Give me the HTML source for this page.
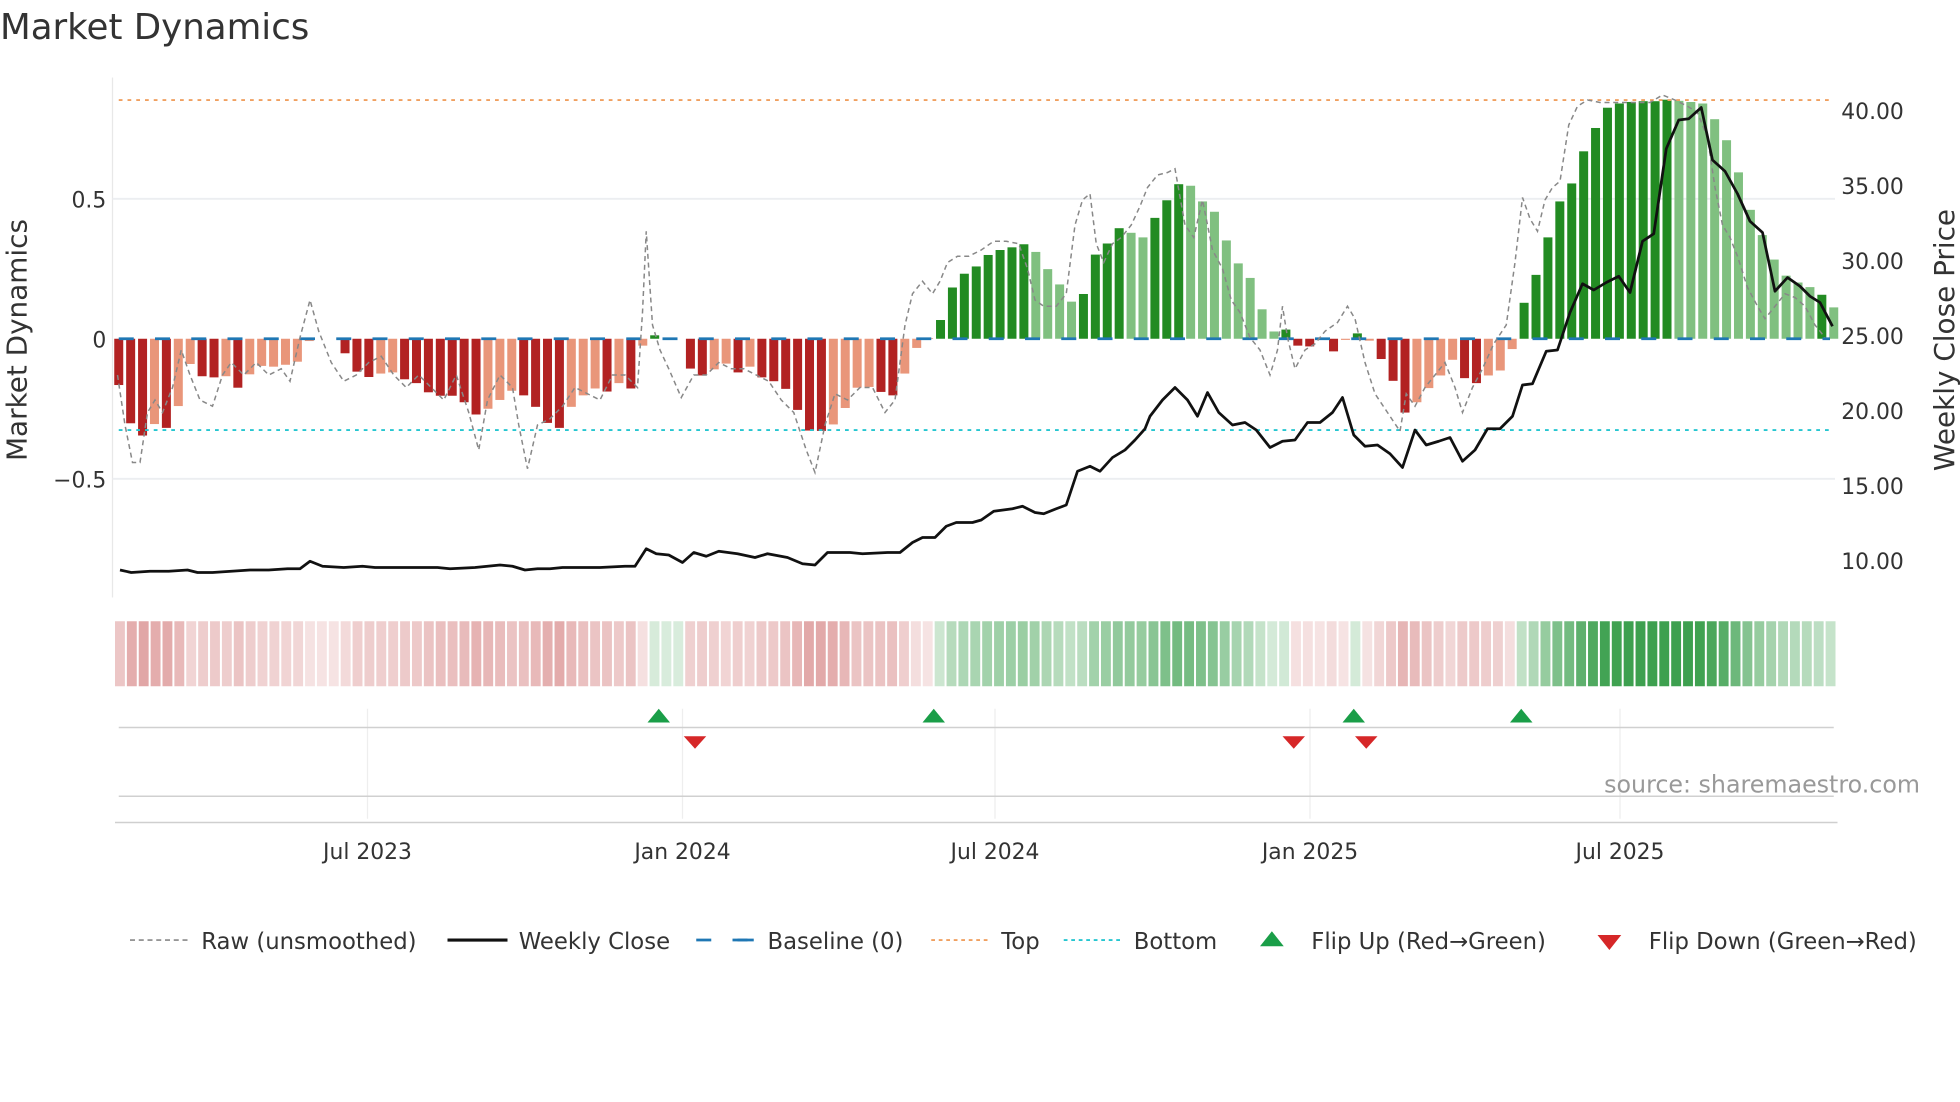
<!DOCTYPE html>
<html><head><meta charset="utf-8"><style>
html,body{margin:0;padding:0;background:#fff;}
svg{display:block;}
text{font-family:"DejaVu Sans","Liberation Sans",sans-serif;fill:#333;}
</style></head><body>
<svg id="s" width="1960" height="1102" viewBox="0 0 1568 881.6" xmlns="http://www.w3.org/2000/svg">
<rect width="1568" height="881.6" fill="#fff"/>
<text x="0" y="31" font-size="28.5">Market Dynamics</text>
<line x1="90" y1="62" x2="90" y2="478" stroke="#e8e8e8" stroke-width="1"/>
<line x1="90" y1="159" x2="1468" y2="159" stroke="#eceef1" stroke-width="1.5"/>
<line x1="90" y1="383" x2="1468" y2="383" stroke="#eceef1" stroke-width="1.5"/>
<g id="bars"></g>
<line x1="95" y1="80" x2="1464" y2="80" stroke="#f0a060" stroke-width="1.5" stroke-dasharray="3,4"/>
<line x1="95" y1="344" x2="1464" y2="344" stroke="#26c6d0" stroke-width="1.5" stroke-dasharray="3,4"/>
<line x1="95" y1="271" x2="1464" y2="271" stroke="#1f77b4" stroke-width="2.2" stroke-dasharray="12,17"/>
<polyline id="raw" fill="none" stroke="#888" stroke-width="1.2" stroke-dasharray="4,3"/>
<polyline id="price" fill="none" stroke="#111" stroke-width="2.2" stroke-linejoin="round"/>
<g font-size="17.5" text-anchor="end">
<text x="85" y="166">0.5</text><text x="85" y="278">0</text><text x="85" y="390">−0.5</text>
</g>
<g font-size="17.5">
<text x="1473" y="95">40.00</text><text x="1473" y="155">35.00</text><text x="1473" y="215">30.00</text>
<text x="1473" y="275">25.00</text><text x="1473" y="335">20.00</text><text x="1473" y="395">15.00</text>
<text x="1473" y="455">10.00</text>
</g>
<text transform="translate(21,272) rotate(-90)" font-size="22.3" text-anchor="middle">Market Dynamics</text>
<text transform="translate(1563,272) rotate(-90)" font-size="22.3" text-anchor="middle">Weekly Close Price</text>
<g id="heat"></g>
<g stroke="#eeeeee" stroke-width="1">
<line x1="294" y1="567" x2="294" y2="655"/><line x1="546" y1="567" x2="546" y2="655"/>
<line x1="796" y1="567" x2="796" y2="655"/><line x1="1048" y1="567" x2="1048" y2="655"/>
<line x1="1296" y1="567" x2="1296" y2="655"/>
</g>
<line x1="95" y1="582" x2="1467" y2="582" stroke="#d0d0d0" stroke-width="1.2"/>
<line x1="95" y1="637" x2="1467" y2="637" stroke="#d0d0d0" stroke-width="1.2"/>
<line x1="92" y1="658" x2="1470" y2="658" stroke="#cfcfcf" stroke-width="1.2"/>
<g fill="#1a9e48">
<path d="M518,578 L536,578 L527,567 Z"/><path d="M738,578 L756,578 L747,567 Z"/>
<path d="M1074,578 L1092,578 L1083,567 Z"/><path d="M1208,578 L1226,578 L1217,567 Z"/>
</g>
<g fill="#d62728">
<path d="M547,589 L565,589 L556,599 Z"/><path d="M1026,589 L1044,589 L1035,599 Z"/>
<path d="M1084,589 L1102,589 L1093,599 Z"/>
</g>
<text x="1536" y="634" font-size="19" text-anchor="end" style="fill:#999">source: sharemaestro.com</text>
<g font-size="17.5" text-anchor="middle">
<text x="294" y="687">Jul 2023</text><text x="546" y="687">Jan 2024</text><text x="796" y="687">Jul 2024</text>
<text x="1048" y="687">Jan 2025</text><text x="1296" y="687">Jul 2025</text>
</g>
<g font-size="18.2">
<line x1="104" y1="752" x2="150" y2="752" stroke="#888" stroke-width="1.3" stroke-dasharray="4,3"/>
<text x="161" y="759">Raw (unsmoothed)</text>
<line x1="358" y1="752" x2="406" y2="752" stroke="#111" stroke-width="2.5"/>
<text x="415" y="759">Weekly Close</text>
<line x1="557" y1="752" x2="603" y2="752" stroke="#1f77b4" stroke-width="2.2" stroke-dasharray="12,17"/>
<line x1="590" y1="752" x2="603" y2="752" stroke="#1f77b4" stroke-width="2.2"/>
<text x="614" y="759">Baseline (0)</text>
<line x1="745" y1="752" x2="790" y2="752" stroke="#f0a060" stroke-width="1.5" stroke-dasharray="3,3"/>
<text x="801" y="759">Top</text>
<line x1="851" y1="752" x2="896" y2="752" stroke="#26c6d0" stroke-width="1.5" stroke-dasharray="3,3"/>
<text x="907" y="759">Bottom</text>
<path d="M1008,757 L1027,757 L1017.5,745 Z" fill="#1a9e48"/>
<text x="1049" y="759">Flip Up (Red→Green)</text>
<path d="M1278,748 L1297,748 L1287.5,760 Z" fill="#d62728"/>
<text x="1319" y="759">Flip Down (Green→Red)</text>
</g>
</svg>
<script>
var NS="http://www.w3.org/2000/svg";
var zy=[1008,1108,1140,1110,1120,1063,953,985,988,985,1015,980,958,960,955,947,893,887,887,
925,973,987,978,975,993,1003,1027,1036,1036,1053,1085,1070,1047,1023,1035,1065,1107,1120,1065,1035,1017,1025,1003,1017,905,
878,887,887,
965,983,967,952,975,960,988,998,1018,1073,1127,1128,1111,1068,1015,1013,1026,1035,978,911,885,
838,753,717,698,668,655,648,640,660,705,745,790,770,667,638,598,610,622,571,525,483,487,528,555,630,690,728,810,868,863,
905,907,890,920,890,873,892,940,997,1080,1053,1016,983,942,990,1003,983,970,914,
793,720,622,528,481,397,336,283,272,268,266,266,262,265,268,272,313,368,452,550,616,680,722,740,752,772,805];
var ty="rrrprpprrprpppppp"+"00"+"rrrpprrrrrrrppprrrrppprprp"+"g00"+"rrpprprrrrrrpppprrppp"+"gggggggg"+"llll"+"gggg"+"ll"+"ggg"+"llllllll"+"g"+"rrprp"+"g"+"prrrpppprrppp"+"ggggggggggggg"+"llllllllllll"+"gl";
var col={r:"#b22222",p:"#e9967a",g:"#228b22",l:"#80c080","0":"#e9967a"};
var bars=document.getElementById("bars"),heat=document.getElementById("heat");
var N=zy.length,sp=(1467-95)/(N-1),cw=1378/N;
for(var i=0;i<N;i++){
 var v=(887-zy[i])/732, x=95+i*sp, y=271-v*224, t=ty[i]||"p";
 var h=Math.abs(y-271);
 if(h>0.5){var r=document.createElementNS(NS,"rect");
  r.setAttribute("x",x-3.6);r.setAttribute("width",7.2);
  r.setAttribute("y",Math.min(y,271));r.setAttribute("height",h);
  r.setAttribute("fill",col[t]);bars.appendChild(r);}
 var c=document.createElementNS(NS,"rect");
 c.setAttribute("x",92+i*cw);c.setAttribute("width",cw-1.6);c.setAttribute("y",497);c.setAttribute("height",52);
 var f;
 if(t=="g"||t=="l"||(t=="0"&&i>40&&i<50)){var a=0.18+Math.min(Math.max(v,0),0.85)/0.85*0.72;f="rgba(40,150,60,"+a.toFixed(2)+")";}
 else{var a=0.14+Math.min(Math.abs(v),0.35)/0.35*0.32;f="rgba(190,60,60,"+a.toFixed(2)+")";}
 c.setAttribute("fill",f);heat.appendChild(c);
}
var price=[96,456,105,458,120,457,135,457,150,456,158,458,170,458,185,457,200,456,215,456,230,455,240,455,248,449,258,453,275,454,290,453,300,454,320,454,350,454,360,455,380,454,400,452,410,453,420,456,430,455,440,455,450,454,480,454,500,453,508,453,517,439,525,443,535,444,546,450,555,442,565,445,575,441,590,443,604,446,614,443,630,446,642,451,652,452,662,442,680,442,690,443,710,442,720,442,730,434,738,430,748,430,757,421,765,418,778,418,785,416,795,409,810,407,818,405,828,410,835,411,845,407,853,404,862,377,872,373,880,377,890,366,900,360,908,352,916,343,920,333,930,320,940,310,950,320,958,333,966,314,975,330,986,340,996,338,1005,344,1016,358,1026,353,1036,352,1046,338,1056,338,1066,330,1074,318,1083,348,1092,357,1102,356,1112,363,1122,374,1132,344,1141,356,1151,353,1160,350,1170,369,1180,360,1190,343,1200,343,1210,333,1218,308,1226,307,1237,281,1246,280,1256,250,1266,227,1275,232,1285,226,1295,221,1304,234,1314,193,1323,187,1333,119,1343,96,1351,95,1361,86,1370,128,1380,137,1390,155,1400,177,1410,186,1420,233,1430,222,1440,229,1448,237,1456,242,1466,261];
var raw=[94,300,100,340,106,370,112,370,118,330,124,320,130,330,138,310,145,280,152,300,160,320,170,325,178,300,185,290,195,300,205,290,215,300,225,295,232,305,240,270,248,240,255,265,265,290,275,305,285,300,295,290,305,285,315,300,325,310,335,300,345,310,355,320,365,300,375,330,383,360,390,320,400,300,410,310,415,340,422,375,430,340,440,335,450,325,460,310,470,315,480,320,490,300,500,300,510,310,514,250,517,185,522,260,528,280,535,295,545,318,555,300,565,300,575,290,585,295,595,295,605,300,615,305,625,320,635,330,645,360,652,378,660,340,668,315,678,320,688,310,698,310,708,330,716,320,724,260,730,235,738,225,746,235,752,225,758,210,766,205,775,205,785,200,795,193,805,193,815,195,822,215,828,240,835,245,845,245,853,235,860,180,866,160,872,155,877,195,883,210,890,195,897,190,905,180,912,165,918,150,926,140,934,138,940,135,948,180,955,190,962,160,970,200,978,215,985,240,992,250,1000,270,1008,280,1016,300,1022,280,1026,245,1030,270,1036,295,1044,280,1052,275,1060,265,1070,258,1078,245,1084,255,1092,290,1100,315,1110,330,1120,345,1125,315,1132,325,1140,310,1148,300,1156,290,1164,310,1170,330,1178,310,1186,295,1195,275,1205,260,1212,210,1218,158,1224,175,1230,185,1236,160,1242,150,1248,145,1255,100,1262,85,1270,80,1280,82,1290,82,1300,82,1310,82,1320,82,1330,76,1340,80,1350,85,1358,90,1366,110,1372,150,1378,180,1384,190,1390,205,1398,230,1406,245,1412,255,1420,245,1428,235,1436,238,1444,245,1452,260,1460,270];
function pts(a){var s=[];for(var i=0;i<a.length;i+=2)s.push(a[i]+","+a[i+1]);return s.join(" ");}
document.getElementById("price").setAttribute("points",pts(price));
document.getElementById("raw").setAttribute("points",pts(raw));
</script>
</body></html>
